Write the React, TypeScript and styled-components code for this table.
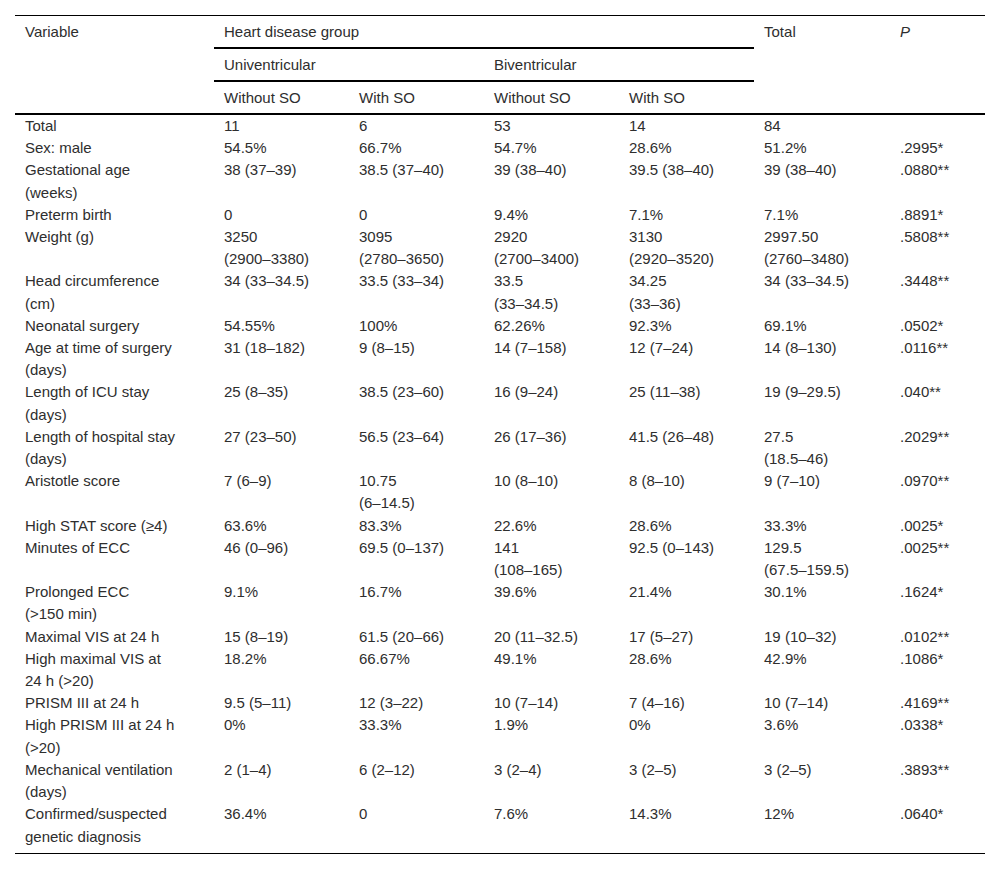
import React from "react";
import styled, { createGlobalStyle } from "styled-components";

type Row = [string, string, string, string, string, string, string];

const rows: Row[] = [
  ["Total", "11", "6", "53", "14", "84", ""],
  ["Sex: male", "54.5%", "66.7%", "54.7%", "28.6%", "51.2%", ".2995*"],
  ["Gestational age\n(weeks)", "38 (37–39)", "38.5 (37–40)", "39 (38–40)", "39.5 (38–40)", "39 (38–40)", ".0880**"],
  ["Preterm birth", "0", "0", "9.4%", "7.1%", "7.1%", ".8891*"],
  ["Weight (g)", "3250\n(2900–3380)", "3095\n(2780–3650)", "2920\n(2700–3400)", "3130\n(2920–3520)", "2997.50\n(2760–3480)", ".5808**"],
  ["Head circumference\n(cm)", "34 (33–34.5)", "33.5 (33–34)", "33.5\n(33–34.5)", "34.25\n(33–36)", "34 (33–34.5)", ".3448**"],
  ["Neonatal surgery", "54.55%", "100%", "62.26%", "92.3%", "69.1%", ".0502*"],
  ["Age at time of surgery\n(days)", "31 (18–182)", "9 (8–15)", "14 (7–158)", "12 (7–24)", "14 (8–130)", ".0116**"],
  ["Length of ICU stay\n(days)", "25 (8–35)", "38.5 (23–60)", "16 (9–24)", "25 (11–38)", "19 (9–29.5)", ".040**"],
  ["Length of hospital stay\n(days)", "27 (23–50)", "56.5 (23–64)", "26 (17–36)", "41.5 (26–48)", "27.5\n(18.5–46)", ".2029**"],
  ["Aristotle score", "7 (6–9)", "10.75\n(6–14.5)", "10 (8–10)", "8 (8–10)", "9 (7–10)", ".0970**"],
  ["High STAT score (≥4)", "63.6%", "83.3%", "22.6%", "28.6%", "33.3%", ".0025*"],
  ["Minutes of ECC", "46 (0–96)", "69.5 (0–137)", "141\n(108–165)", "92.5 (0–143)", "129.5\n(67.5–159.5)", ".0025**"],
  ["Prolonged ECC\n(>150 min)", "9.1%", "16.7%", "39.6%", "21.4%", "30.1%", ".1624*"],
  ["Maximal VIS at 24 h", "15 (8–19)", "61.5 (20–66)", "20 (11–32.5)", "17 (5–27)", "19 (10–32)", ".0102**"],
  ["High maximal VIS at\n24 h (>20)", "18.2%", "66.67%", "49.1%", "28.6%", "42.9%", ".1086*"],
  ["PRISM III at 24 h", "9.5 (5–11)", "12 (3–22)", "10 (7–14)", "7 (4–16)", "10 (7–14)", ".4169**"],
  ["High PRISM III at 24 h\n(>20)", "0%", "33.3%", "1.9%", "0%", "3.6%", ".0338*"],
  ["Mechanical ventilation\n(days)", "2 (1–4)", "6 (2–12)", "3 (2–4)", "3 (2–5)", "3 (2–5)", ".3893**"],
  ["Confirmed/suspected\ngenetic diagnosis", "36.4%", "0", "7.6%", "14.3%", "12%", ".0640*"],
];

const widths = [199, 135, 135, 135, 135, 136, 95];

export default function App() {
  return (
    <>
      <GlobalStyle />
      <Page>
        <Table>
          <colgroup>
            {widths.map((w, i) => (
              <col key={i} style={{ width: w }} />
            ))}
          </colgroup>
          <Head>
            <tr>
              <HeadCell rowSpan={3}>Variable</HeadCell>
              <HeadCell colSpan={4} $rule>
                Heart disease group
              </HeadCell>
              <HeadCell rowSpan={3}>Total</HeadCell>
              <HeadCell rowSpan={3}>
                <em>P</em>
              </HeadCell>
            </tr>
            <tr>
              <HeadCell colSpan={2} $rule>
                Univentricular
              </HeadCell>
              <HeadCell colSpan={2} $rule>
                Biventricular
              </HeadCell>
            </tr>
            <tr>
              <HeadCell>Without SO</HeadCell>
              <HeadCell>With SO</HeadCell>
              <HeadCell>Without SO</HeadCell>
              <HeadCell>With SO</HeadCell>
            </tr>
          </Head>
          <Body>
            {rows.map((r, i) => (
              <tr key={i}>
                {r.map((c, j) => (
                  <Cell key={j}>{c}</Cell>
                ))}
              </tr>
            ))}
          </Body>
        </Table>
      </Page>
    </>
  );
}

const GlobalStyle = createGlobalStyle`
  body {
    margin: 0;
    background: #fff;
  }
`;

const Page = styled.div`
  padding: 15px;
  font-family: "Liberation Sans", Arial, sans-serif;
  font-size: 15px;
  color: #2e2e2e;
`;

const Table = styled.table`
  width: 970px;
  table-layout: fixed;
  border-collapse: collapse;
  border-top: 1px solid #000;
  border-bottom: 1px solid #000;
`;

const Head = styled.thead`
  border-bottom: 2px solid #000;
`;

const HeadCell = styled.th<{ $rule?: boolean }>`
  font-weight: normal;
  text-align: left;
  vertical-align: top;
  padding: 5px 10px 4px;
  line-height: 22px;
  border-bottom: ${(p) => (p.$rule ? "2px solid #000" : "none")};

  em {
    font-style: italic;
  }
`;

const Body = styled.tbody`
  tr:last-child td {
    padding-bottom: 5px;
  }
`;

const Cell = styled.td`
  vertical-align: top;
  padding: 0 10px;
  line-height: 22.2px;
  white-space: pre-line;
`;
